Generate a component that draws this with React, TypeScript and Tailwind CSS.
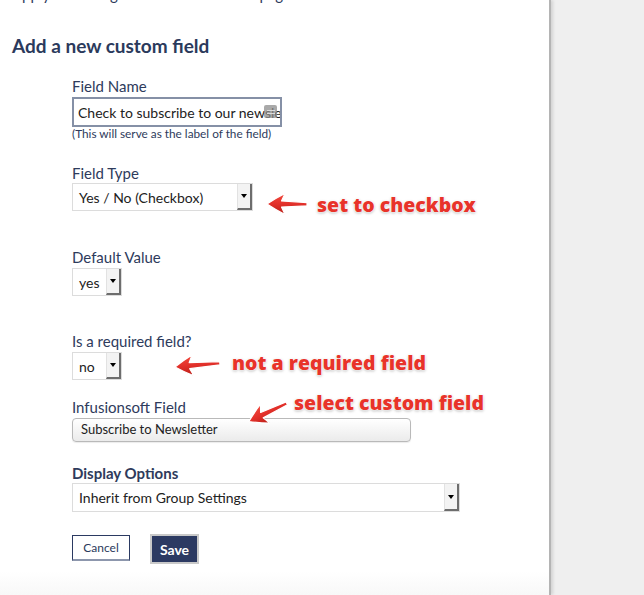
import React from "react";

function Arrow({ className, length }: { className: string; length: number }) {
  const L = length - 1;
  return (
    <svg
      className={`absolute ${className}`}
      width={length}
      height={24}
      viewBox={`0 0 ${length} 24`}
    >
      <defs>
        <linearGradient id="arrowFill" x1="0" y1="0" x2="0" y2="1">
          <stop offset="0" stopColor="#f24a3d" />
          <stop offset="0.5" stopColor="#e2302a" />
          <stop offset="1" stopColor="#b81f18" />
        </linearGradient>
      </defs>
      <path
        d={`M1 12 Q10 6 19 1.5 L15.5 9 L${L} 10.6 L${L} 13.8 L15.5 15 L19 22.5 Q10 18 1 12 Z`}
        fill="url(#arrowFill)"
        stroke="#fff"
        strokeWidth="1.2"
        strokeLinejoin="round"
      />
    </svg>
  );
}

function Note({ className, children }: { className: string; children: React.ReactNode }) {
  return (
    <div
      className={`absolute whitespace-nowrap font-['Open_Sans',sans-serif] text-[19.5px] font-extrabold leading-[22px] text-[#e8332a] [text-shadow:0_0_1px_#fff,0_0_2px_#fff,0_0_2px_#fff,0_1px_3px_rgba(0,0,0,0.35)] ${className}`}
    >
      {children}
    </div>
  );
}

function Select({ value, width, height }: { value: string; width: string; height: string }) {
  return (
    <div className={`flex ${width} ${height} border border-[#dcdcdc] bg-white`}>
      <div className="flex flex-1 items-center overflow-hidden whitespace-nowrap pl-[6px] text-[14px] text-[#222]">
        {value}
      </div>
      <div className="flex w-[15px] items-center justify-center border-l border-[#e2e2e2] border-r-2 border-b-2 border-r-[#6d6d6d] border-b-[#6d6d6d] bg-[#f3f3f3]">
        <div className="h-0 w-0 border-x-[3px] border-t-[4px] border-x-transparent border-t-black" />
      </div>
    </div>
  );
}

function Label({ children, bold }: { children: React.ReactNode; bold?: boolean }) {
  return (
    <div className={`text-[15px] leading-[18px] text-[#2e3b5c] ${bold ? "font-bold" : ""}`}>
      {children}
    </div>
  );
}

export default function App() {
  return (
    <div className="flex h-[595px] w-[644px] overflow-hidden bg-[#efefef] font-['Lato',sans-serif]">
      <div className="relative flex w-[551px] flex-col border-r-2 border-[#b4b4b4] bg-gradient-to-b from-white from-[96%] to-[#f8f8f8] shadow-[2px_0_3px_rgba(0,0,0,0.12)]">
        <div className="h-[4px] overflow-hidden pl-[12px]">
          <div className="-mt-[15px] text-[15px] leading-[18px] text-[#2e3b5c]">
            Apply to the registration form on this page
          </div>
        </div>

        <h2 className="mt-[30px] pl-[12px] text-[19px] font-bold leading-[24px] text-[#2b3a5c]">
          Add a new custom field
        </h2>

        <div className="flex flex-col pl-[72px]">
          <div className="mt-[19px]">
            <Label>Field Name</Label>
          </div>
          <div className="relative mt-[2px] flex h-[30px] w-[210px] items-center overflow-hidden border-2 border-[#8590a6] bg-white pl-[4px] text-[14px] text-[#222]">
            <span className="whitespace-nowrap">Check to subscribe to our newsletter</span>
            <div className="absolute right-[3px] top-[6px] flex h-[13px] w-[13px] flex-col items-center justify-center gap-[2px] rounded-[2px] bg-[#8c8c8c]/75">
              <div className="h-[1px] w-[8px] bg-[#dcdcdc]" />
              <div className="h-[1px] w-[8px] bg-[#dcdcdc]" />
            </div>
          </div>
          <div className="text-[11.8px] leading-[14px] text-[#2e3b5c]">
            (This will serve as the label of the field)
          </div>

          <div className="mt-[23px]">
            <Label>Field Type</Label>
          </div>
          <div className="mt-[1px]">
            <Select value="Yes / No (Checkbox)" width="w-[181px]" height="h-[28px]" />
          </div>

          <div className="mt-[37px]">
            <Label>Default Value</Label>
          </div>
          <div className="mt-[2px]">
            <Select value="yes" width="w-[50px]" height="h-[28px]" />
          </div>

          <div className="mt-[36px]">
            <Label>Is a required field?</Label>
          </div>
          <div className="mt-[2px]">
            <Select value="no" width="w-[50px]" height="h-[28px]" />
          </div>

          <div className="mt-[18px]">
            <Label>Infusionsoft Field</Label>
          </div>
          <div className="mt-[2px] flex h-[24px] w-[339px] items-center rounded-[4px] border border-[#b9b9b9] bg-gradient-to-b from-white to-[#ebebeb] pl-[8px] text-[13px] text-[#222] shadow-[0_1px_1px_rgba(0,0,0,0.08)]">
            Subscribe to Newsletter
          </div>

          <div className="mt-[22px]">
            <Label bold>Display Options</Label>
          </div>
          <div className="mt-[1px]">
            <Select value="Inherit from Group Settings" width="w-[388px]" height="h-[29px]" />
          </div>

          <div className="mt-[22px] flex items-start gap-[20px]">
            <button className="mt-[1px] flex h-[26px] w-[58px] items-center justify-center border border-b-2 border-[#2b3a62] border-b-[#8d97ad] bg-white text-[12px] text-[#2b3a5c]">
              Cancel
            </button>
            <button className="flex h-[30px] w-[49px] items-center justify-center border-2 border-[#c9c9c9] bg-[#2c3a62] text-[14px] font-bold text-white">
              Save
            </button>
          </div>
        </div>

        <Arrow className="left-[266px] top-[192px]" length={42} />
        <Note className="left-[317px] top-[194px]">set to checkbox</Note>

        <Arrow className="left-[174px] top-[355px] origin-left rotate-[-5deg]" length={47} />
        <Note className="left-[232px] top-[352px]">not a required field</Note>

        <Arrow className="left-[248px] top-[410px] origin-left rotate-[-26deg]" length={44} />
        <Note className="left-[294px] top-[392px]">select custom field</Note>
      </div>
      <div className="flex-1" />
    </div>
  );
}
